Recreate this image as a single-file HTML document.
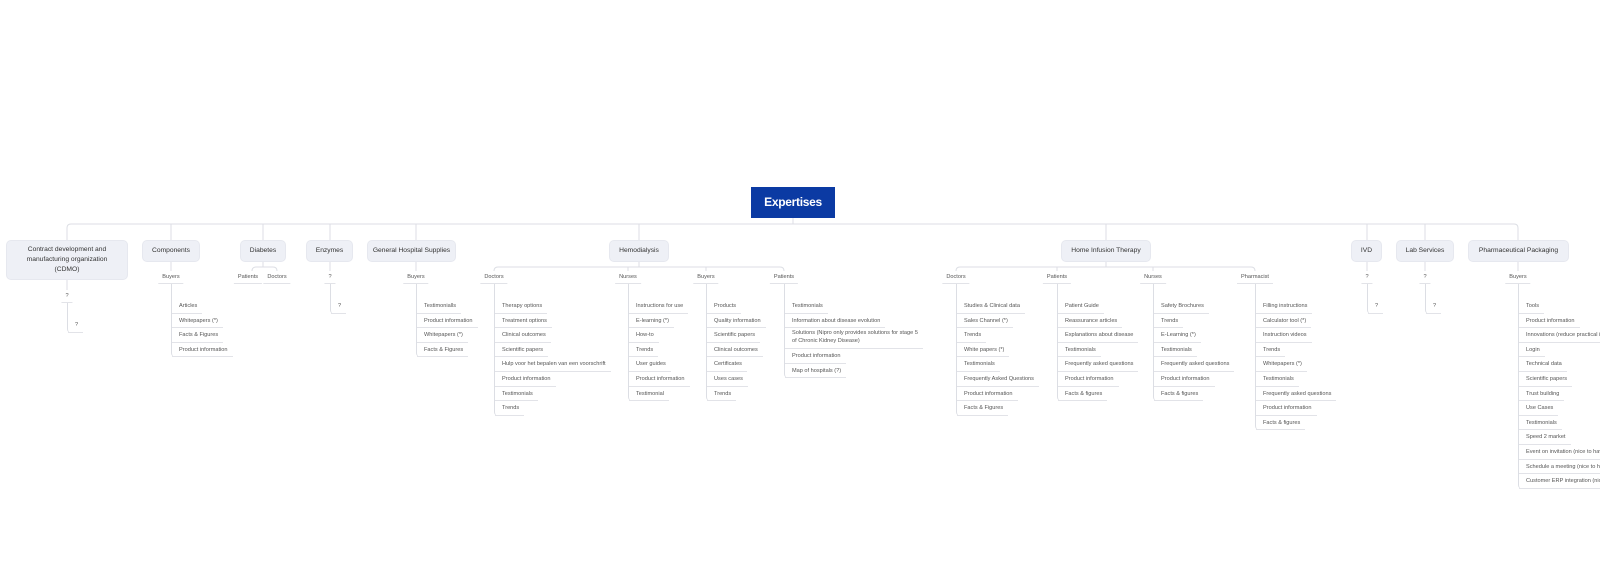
<!DOCTYPE html>
<html><head><meta charset="utf-8"><style>
html,body{margin:0;padding:0;background:#fff;width:1600px;height:571px;overflow:hidden;position:relative;font-family:"Liberation Sans",sans-serif}
svg{position:absolute;left:0;top:0}
.root{position:absolute;left:751px;top:187px;width:84px;height:31px;background:#0b3aa3;color:#fff;font-weight:bold;font-size:12px;line-height:31px;text-align:center;letter-spacing:-0.3px}
.b{position:absolute;top:241px;height:20px;background:#eef0f6;border-radius:4px;box-shadow:0 0 0 1px #e6e8ef;color:#333;font-size:6.7px;line-height:20px;text-align:center;white-space:nowrap}
.l{position:absolute;top:271px;transform:translateX(-50%);padding:0 4px;height:12px;line-height:12px;font-size:5.6px;color:#555;border-bottom:1px solid #e2e3e8;background:#fff;white-space:nowrap}
.c{position:absolute;top:284px;padding-top:15px;border-left:1px solid #dcdee4;border-bottom-left-radius:4px}
.c div{width:fit-content;height:11.6px;padding:2px 5px 0 7px;line-height:11.6px;font-size:5.6px;color:#555;border-bottom:1px solid #e2e3e8;white-space:nowrap}
.c div.t{height:18px;line-height:7.7px;padding-top:2px}
</style></head><body>
<svg width="1600" height="571" fill="none" stroke="#dcdee4" stroke-width="1">
<path d="M793 218V224"/>
<path d="M67 241V228Q67 224 71 224H1514Q1518 224 1518 228V241"/>
<path d="M171 224V241M263 224V241M330 224V241M416 224V241M639 224V241M1106 224V241M1367 224V241M1425 224V241"/>
<path d="M67 279V303M171 261V284M330 261V284M416 261V284M1367 261V284M1425 261V284M1518 261V284"/>
<path d="M263 261V267M252 284V271Q252 267 256 267H273Q277 267 277 271V284"/>
<path d="M639 261V267M494 284V271Q494 267 498 267H780Q784 267 784 271V284M628 267V284M706 267V284"/>
<path d="M1106 261V267M956 284V271Q956 267 960 267H1251Q1255 267 1255 271V284M1057 267V284M1153 267V284"/>
</svg>
<div class="root">Expertises</div>
<div class="b" style="left:7px;width:120px;height:38px;line-height:10px;padding-top:0"><div style="padding-top:4px">Contract development and<br>manufacturing organization<br>(CDMO)</div></div>
<div class="b" style="left:143px;width:56px">Components</div>
<div class="b" style="left:241px;width:44px">Diabetes</div>
<div class="b" style="left:307px;width:45px">Enzymes</div>
<div class="b" style="left:368px;width:87px">General Hospital Supplies</div>
<div class="b" style="left:610px;width:58px">Hemodialysis</div>
<div class="b" style="left:1062px;width:88px">Home Infusion Therapy</div>
<div class="b" style="left:1352px;width:29px">IVD</div>
<div class="b" style="left:1397px;width:56px">Lab Services</div>
<div class="b" style="left:1469px;width:99px">Pharmaceutical Packaging</div>

<div class="l" style="left:67px;top:290px">?</div>
<div class="l" style="left:171px">Buyers</div>
<div class="l" style="left:248px">Patients</div>
<div class="l" style="left:277px">Doctors</div>
<div class="l" style="left:330px">?</div>
<div class="l" style="left:416px">Buyers</div>
<div class="l" style="left:494px">Doctors</div>
<div class="l" style="left:628px">Nurses</div>
<div class="l" style="left:706px">Buyers</div>
<div class="l" style="left:784px">Patients</div>
<div class="l" style="left:956px">Doctors</div>
<div class="l" style="left:1057px">Patients</div>
<div class="l" style="left:1153px">Nurses</div>
<div class="l" style="left:1255px">Pharmacist</div>
<div class="l" style="left:1367px">?</div>
<div class="l" style="left:1425px">?</div>
<div class="l" style="left:1518px">Buyers</div>

<div class="c" style="left:67px;top:303px"><div>?</div></div>
<div class="c" style="left:171px"><div>Articles</div><div>Whitepapers (*)</div><div>Facts &amp; Figures</div><div>Product information</div></div>
<div class="c" style="left:330px"><div>?</div></div>
<div class="c" style="left:416px"><div>Testimonialls</div><div>Product information</div><div>Whitepapers (*)</div><div>Facts &amp; Figures</div></div>
<div class="c" style="left:494px"><div>Therapy options</div><div>Treatment options</div><div>Clinical outcomes</div><div>Scientific papers</div><div>Hulp voor het bepalen van een voorschrift</div><div>Product information</div><div>Testimonials</div><div>Trends</div></div>
<div class="c" style="left:628px"><div>Instructions for use</div><div>E-learning (*)</div><div>How-to</div><div>Trends</div><div>User guides</div><div>Product information</div><div>Testimonial</div></div>
<div class="c" style="left:706px"><div>Products</div><div>Quality information</div><div>Scientific papers</div><div>Clinical outcomes</div><div>Certificates</div><div>Uses cases</div><div>Trends</div></div>
<div class="c" style="left:784px"><div>Testimonials</div><div>Information about disease evolution</div><div class="t">Solutions (Nipro only provides solutions for stage 5<br>of Chronic Kidney Disease)</div><div>Product information</div><div>Map of hospitals (?)</div></div>
<div class="c" style="left:956px"><div>Studies &amp; Clinical data</div><div>Sales Channel (*)</div><div>Trends</div><div>White papers (*)</div><div>Testimonials</div><div>Frequently Asked Questions</div><div>Product information</div><div>Facts &amp; Figures</div></div>
<div class="c" style="left:1057px"><div>Patient Guide</div><div>Reassurance articles</div><div>Explanations about disease</div><div>Testimonials</div><div>Frequently asked questions</div><div>Product information</div><div>Facts &amp; figures</div></div>
<div class="c" style="left:1153px"><div>Safety Brochures</div><div>Trends</div><div>E-Learning (*)</div><div>Testimonials</div><div>Frequently asked questions</div><div>Product information</div><div>Facts &amp; figures</div></div>
<div class="c" style="left:1255px"><div>Filling instructions</div><div>Calculator tool (*)</div><div>Instruction videos</div><div>Trends</div><div>Whitepapers (*)</div><div>Testimonials</div><div>Frequently asked questions</div><div>Product information</div><div>Facts &amp; figures</div></div>
<div class="c" style="left:1367px"><div>?</div></div>
<div class="c" style="left:1425px"><div>?</div></div>
<div class="c" style="left:1518px"><div>Tools</div><div>Product information</div><div>Innovations (reduce practical issues)</div><div>Login</div><div>Technical data</div><div>Scientific papers</div><div>Trust building</div><div>Use Cases</div><div>Testimonials</div><div>Speed 2 market</div><div>Event on invitation (nice to have)</div><div>Schedule a meeting (nice to have)</div><div>Customer ERP integration (nice to have)</div></div>
</body></html>
